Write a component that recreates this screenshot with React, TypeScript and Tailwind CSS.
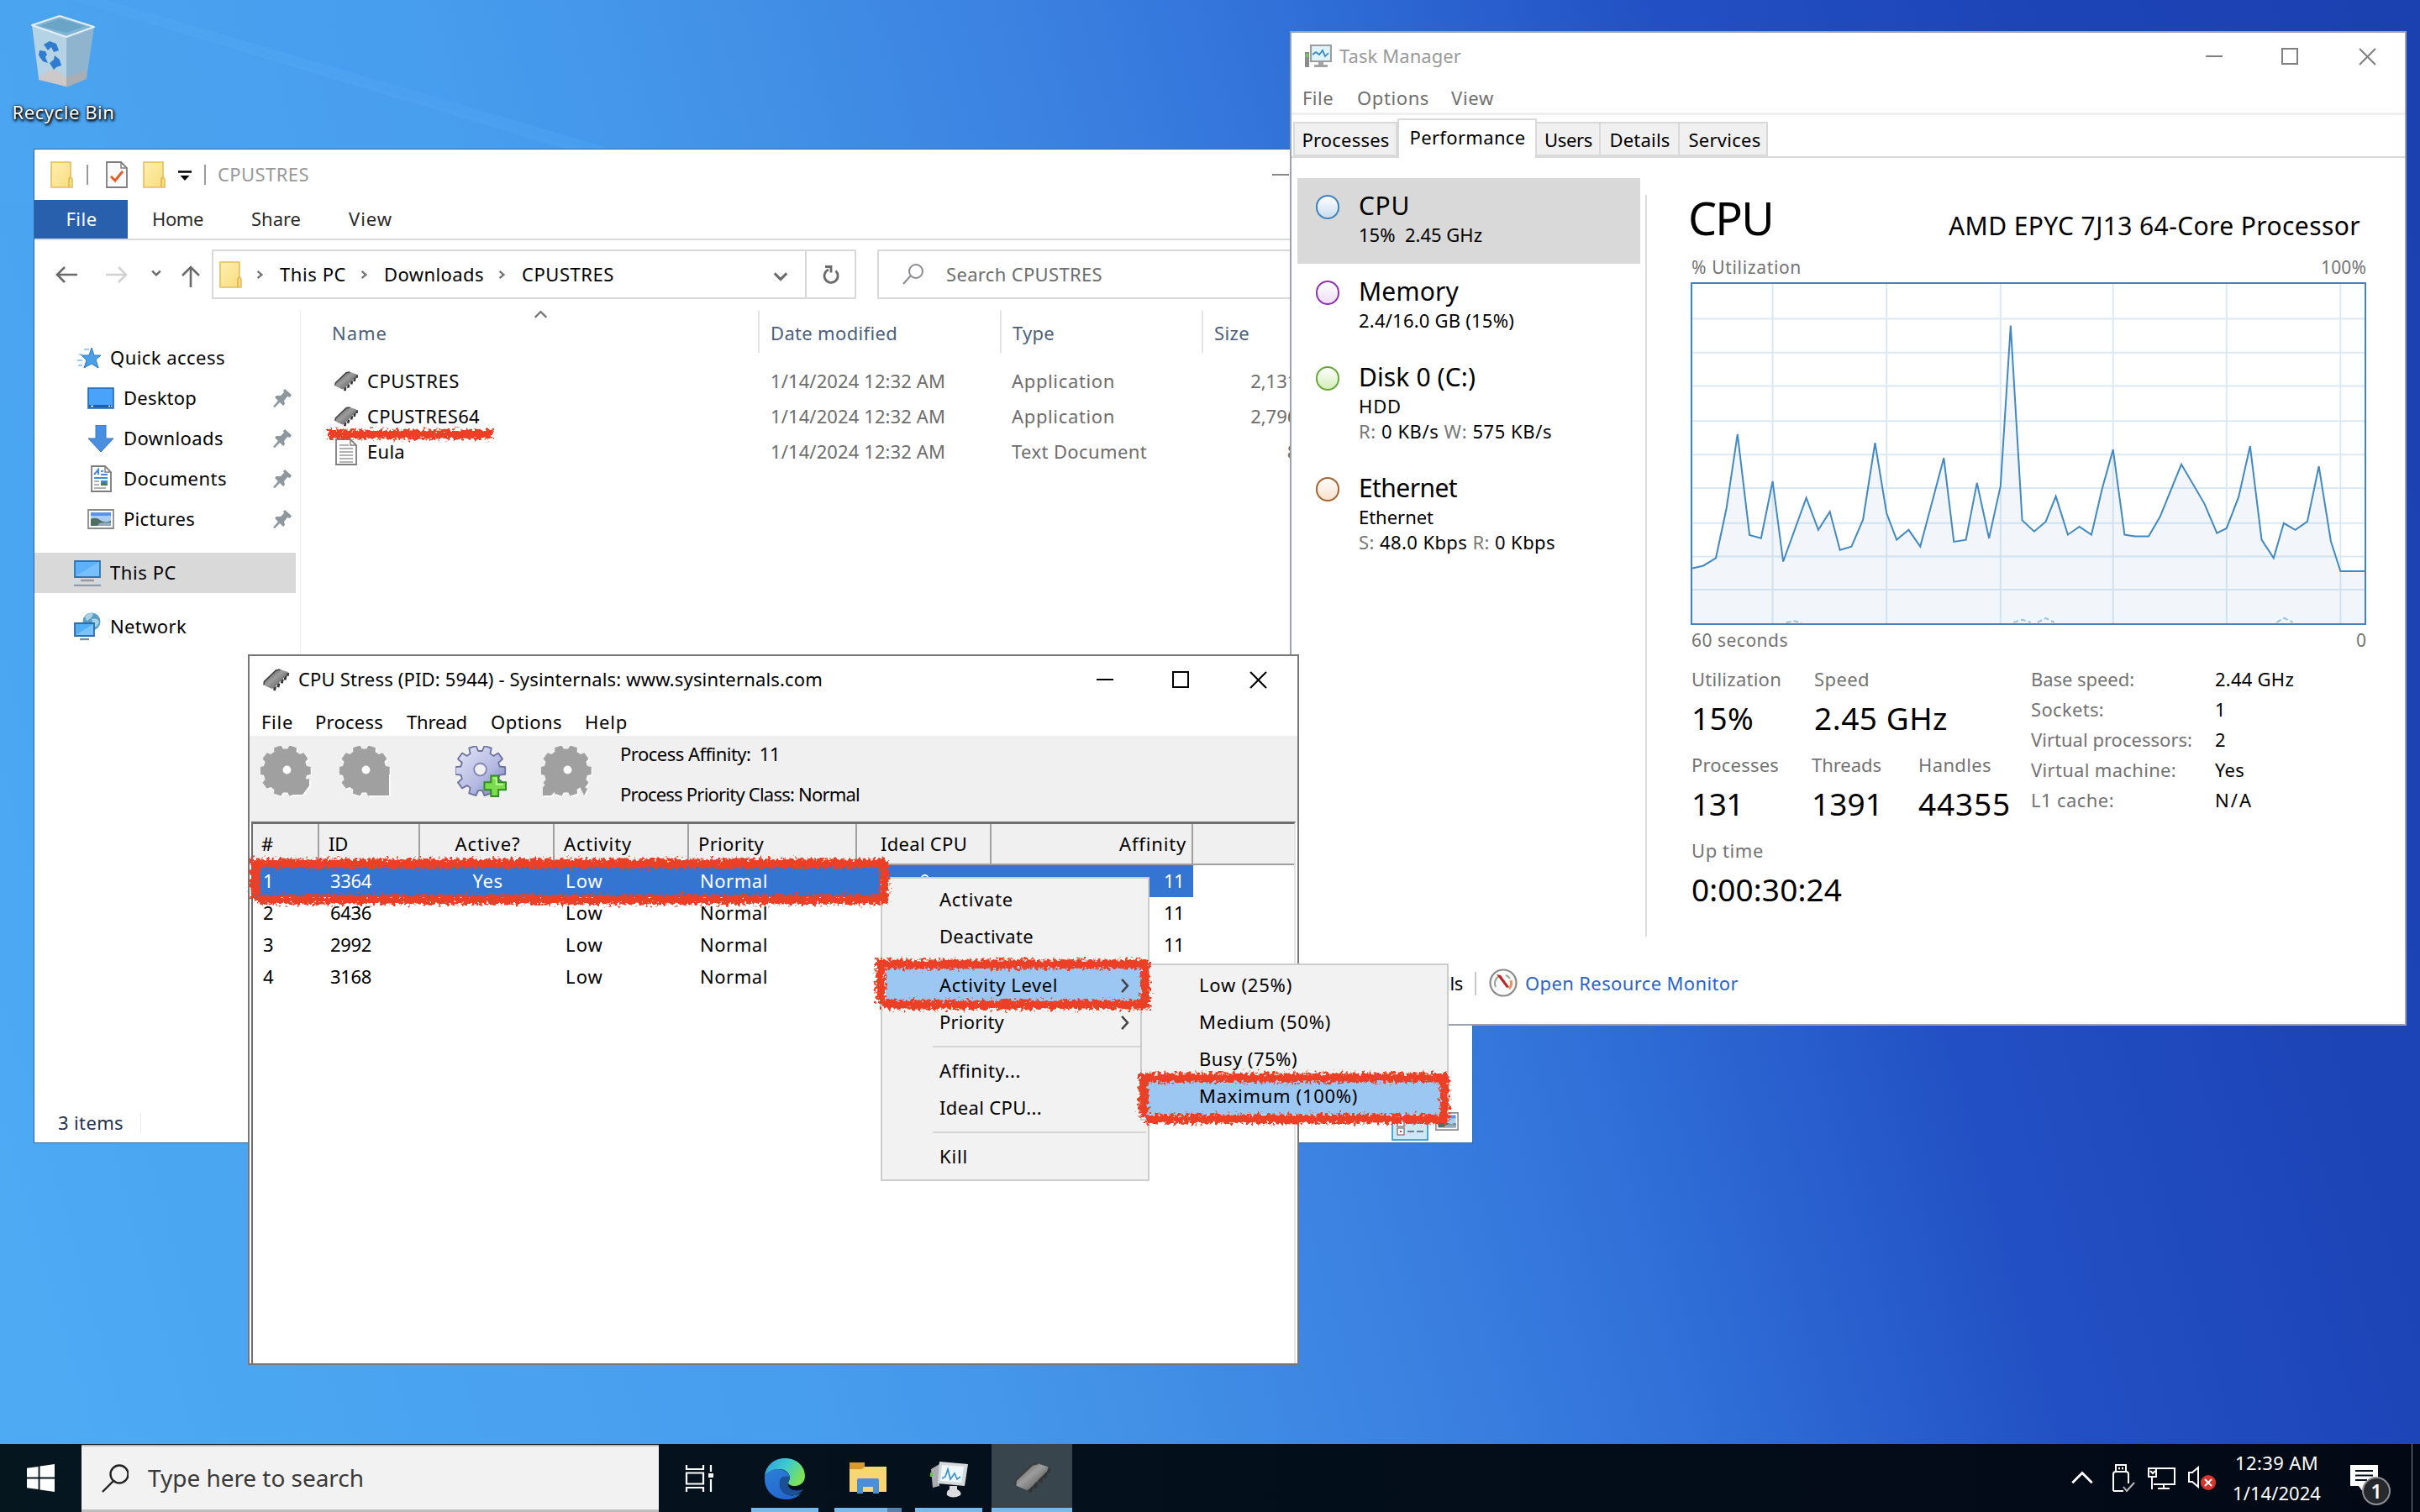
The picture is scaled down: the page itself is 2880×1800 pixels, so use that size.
import React, { useLayoutEffect, useRef } from "react";

/* Text run whose tracking is adjusted so that it fills a given width. */
function T({ w, className = "", children }: { w?: number; className?: string; children: React.ReactNode }) {
  const ref = useRef<HTMLSpanElement>(null);
  useLayoutEffect(() => {
    const el = ref.current;
    if (!el || !w) return;
    el.style.letterSpacing = "0px";
    const n = (el.textContent || "").length;
    const natural = el.getBoundingClientRect().width;
    el.style.letterSpacing = (w + 3 - natural) / n + "px";
  }, [w]);
  return (
    <span ref={ref} className={"inline-block shrink-0 whitespace-pre pb-[2px] pl-px " + className}>
      {children}
    </span>
  );
}

/* ---------- icons ---------- */

const Folder = ({ className = "" }) => (
  <svg viewBox="0 0 27 32" className={"h-8 w-[27px] shrink-0 " + className}>
    <defs>
      <linearGradient id="fold" x1="0" y1="0" x2="1" y2="1">
        <stop offset="0" stopColor="#fff0b0" />
        <stop offset="1" stopColor="#f8dc7e" />
      </linearGradient>
    </defs>
    <path d="M1 1h23v18l2 2v10H1z" fill="url(#fold)" stroke="#e3bf55" strokeWidth="1.6" />
    <path d="M22 31V22q0-3 3-3" fill="none" stroke="#dcb64a" strokeWidth="1.6" />
  </svg>
);

const CheckDoc = ({ className = "" }) => (
  <svg viewBox="0 0 26 32" className={"h-8 w-[26px] shrink-0 " + className}>
    <path d="M1 1h17l7 7v23H1z" fill="#fafafa" stroke="#7d7d7d" strokeWidth="1.8" />
    <path d="M18 1v7h7" fill="none" stroke="#7d7d7d" strokeWidth="1.4" />
    <path d="M6 18l5 5 9-11" fill="none" stroke="#e0602a" strokeWidth="3" />
  </svg>
);

const Chip = ({ className = "" }) => (
  <svg viewBox="0 0 32 28" preserveAspectRatio="none" className={"shrink-0 " + className}>
    <defs>
      <linearGradient id="chip" x1="0" y1="0" x2="1" y2="1">
        <stop offset="0" stopColor="#4a4a4a" />
        <stop offset="0.45" stopColor="#9c9c9c" />
        <stop offset="1" stopColor="#4a4a4a" />
      </linearGradient>
    </defs>
    <path d="M14 27l1-5M18.500 23l1-5M23 18l1-5M27 14l1-6M30 9l1-4" stroke="#333" strokeWidth="3" />
    <path d="M1 16L16 2l5-1 9 3-1 4-15 15-3 2-9-4z" fill="url(#chip)" />
    <path d="M1 20L1.500 16 16 2l5-1" fill="none" stroke="#3c3c3c" strokeWidth="1.600" />
    <path d="M12 24L30 5" stroke="#7c7c7c" strokeWidth="1.500" />
  </svg>
);

const TextDoc = () => (
  <svg viewBox="0 0 26 32" className="h-[32px] w-[26px] shrink-0">
    <path d="M1 1h17l7 7v23H1z" fill="#fff" stroke="#7d7d7d" strokeWidth="1.8" />
    <path d="M18 1v7h7" fill="none" stroke="#7d7d7d" strokeWidth="1.4" />
    <path d="M5 8h11M5 12h16M5 16h16M5 20h16M5 24h16M5 28h16" stroke="#999" strokeWidth="1.5" />
  </svg>
);

const Pin = () => (
  <svg viewBox="0 0 24 22" className="h-[22px] w-6 shrink-0">
    <path d="M14 0l8 7-2 3-3-1-4 5 1 4-2 2-4-4-6 6-2-1 6-7-4-4 2-2 5 0 4-4-1-2z" fill="#8d979d" />
  </svg>
);

const Star = () => (
  <svg viewBox="0 0 28 26" className="h-[26px] w-7 shrink-0">
    <path d="M17 1l3 9h8l-6 5 3 10-8-5-9 5 3-9-6-6h9z" fill="#49a0e8" stroke="#2a78c2" />
    <path d="M8 3h6M2 9h4M0 16h6M1 22h5" stroke="#7cb9ec" strokeWidth="1.6" />
  </svg>
);

const DesktopIcon = () => (
  <svg viewBox="0 0 32 26" className="h-[26px] w-8 shrink-0">
    <path d="M1 1h30v24H1z" fill="#4aa3fb" stroke="#2266b0" strokeWidth="1.6" />
    <path d="M2 21h28v3H2z" fill="#1c5fae" />
    <path d="M4 22.500h3M25 22.500h2M28 22.500h1.500" stroke="#fff" strokeWidth="1.500" />
  </svg>
);

const DownIcon = () => (
  <svg viewBox="0 0 32 32" className="h-8 w-8 shrink-0">
    <path d="M10 0h12v16h9L16 32 1 16h9z" fill="#4a8ee0" stroke="#3a76c4" />
  </svg>
);

const DocIcon = () => (
  <svg viewBox="0 0 32 32" className="h-8 w-8 shrink-0">
    <path d="M5 1h16l7 7v23H5z" fill="#fff" stroke="#7d7d7d" strokeWidth="1.8" />
    <path d="M21 1v7h7" fill="none" stroke="#7d7d7d" strokeWidth="1.4" />
    <path d="M8 11l5-6v6M16 7h3M16 11h8M8 15h16" stroke="#3d8fdc" strokeWidth="2" fill="none" />
    <path d="M8 19h6M8 23h6M8 27h14" stroke="#999" strokeWidth="1.6" />
    <path d="M16 18h8v6h-8z" fill="#3f8bc9" />
    <path d="M16 22l4-2 4 3v1h-8z" fill="#4b7a4b" />
  </svg>
);

const PicIcon = ({ className = "h-6 w-8" }) => (
  <svg viewBox="0 0 32 24" preserveAspectRatio="none" className={"shrink-0 " + className}>
    <path d="M1 1h30v22H1z" fill="#fff" stroke="#8a8a8a" strokeWidth="1.8" />
    <path d="M4 4h24v16H4z" fill="#a9cdf3" />
    <path d="M4 4h24v4H4z" fill="#5a93e8" />
    <path d="M4 12q6-3 11 1t13 1v6H4z" fill="#4e6f62" />
    <path d="M14 17q7-2 14-1v4H12z" fill="#90aac0" />
  </svg>
);

const PcIcon = () => (
  <svg viewBox="0 0 32 32" className="h-8 w-8 shrink-0">
    <path d="M1 2h30v19H1z" fill="#5cb1f9" stroke="#2f75b5" strokeWidth="1.8" />
    <path d="M2 20L30 3v17z" fill="#8cc8fb" opacity="0.6" />
    <path d="M8 25h16M0 31h32" stroke="#8e9cab" strokeWidth="2.400" />
  </svg>
);

const NetIcon = () => (
  <svg viewBox="0 0 32 34" className="h-[34px] w-8 shrink-0">
    <circle cx="21" cy="11" r="10.500" fill="#5a9cc4" />
    <path d="M13 5q6-6 10-3-2 6-8 8zM21 8q7-2 9 3-2 7-6 7z" fill="#a8d2e6" />
    <path d="M1 13h23v15H1z" fill="#52aef5" stroke="#2d6da8" strokeWidth="1.8" />
    <path d="M2 27L23 14v13z" fill="#8ccbf9" opacity="0.7" />
    <path d="M7 32h11" stroke="#7e8c99" strokeWidth="2.400" />
  </svg>
);

const Chevron = ({ d, className = "", sw = 2.6 }: { d: string; className?: string; sw?: number }) => (
  <svg viewBox="0 0 20 20" className={"shrink-0 " + className} fill="none" stroke="currentColor" strokeWidth={sw}>
    <path d={d} />
  </svg>
);
const RIGHT = "M6 3l8 7-8 7";
const DOWN = "M2 6l8 8 8-8";

const Controls = ({ className = "" }) => (
  <div className={"ml-auto flex items-center " + className}>
    <svg viewBox="0 0 20 20" className="h-5 w-5" stroke="currentColor" strokeWidth="2"><path d="M0 10h20" /></svg>
    <svg viewBox="0 0 20 20" className="ml-[70px] h-5 w-5" fill="none" stroke="currentColor" strokeWidth="2"><path d="M1 1h18v18H1z" /></svg>
    <svg viewBox="0 0 20 20" className="ml-[72px] h-[21px] w-[21px]" fill="none" stroke="currentColor" strokeWidth="2"><path d="M1 1l18 18M19 1L1 19" /></svg>
  </div>
);

function gearPath(c: number, inner: number, outer: number, teeth: number) {
  const pts: string[] = [];
  for (let i = 0; i < teeth; i++) {
    const a = (i / teeth) * Math.PI * 2 - Math.PI / 2 + Math.PI / teeth;
    const s = Math.PI / teeth;
    const at = (r: number, t: number) => (c + r * Math.cos(t)).toFixed(1) + " " + (c + r * Math.sin(t)).toFixed(1);
    pts.push(at(inner, a - s * 0.68), at(outer, a - s * 0.46), at(outer, a + s * 0.46), at(inner, a + s * 0.68));
  }
  return "M" + pts.join("L") + "Z";
}
const GEAR = gearPath(30, 24, 30.5, 10);
const BLOB = gearPath(30, 26.5, 31, 10);
const HOLE = "M30 23.500a5 5 0 1 0 .01 0z";

const GrayGear = ({ extra = "", className = "" }) => (
  <svg viewBox="0 0 62 62" className={"h-[61px] w-[61px] shrink-0 " + className}>
    <g transform="translate(1.500 1.500)" fill="#fff">
      <path d={BLOB} />
      {extra && <path d={extra} />}
    </g>
    <path d={BLOB} fill="#a0a0a0" />
    {extra && <path d={extra} fill="#a0a0a0" />}
    <circle cx="32" cy="29" r="5" fill="#fff" />
  </svg>
);

const AddGear = ({ className = "" }) => (
  <svg viewBox="0 0 62 62" className={"h-[61px] w-[61px] shrink-0 " + className}>
    <defs>
      <linearGradient id="gear" x1="0" y1="0" x2="1" y2="1">
        <stop offset="0" stopColor="#e6e8f8" />
        <stop offset="0.6" stopColor="#b4b9e2" />
        <stop offset="1" stopColor="#6f76b4" />
      </linearGradient>
    </defs>
    <path d={GEAR + HOLE} fill="url(#gear)" fillRule="evenodd" stroke="#6a6f9c" strokeWidth="1.800" strokeLinejoin="round" />
    <circle cx="30" cy="28.500" r="7.500" fill="#f0f0f0" stroke="#8287b4" strokeWidth="2" />
    <path d="M43 36h9v8h9v9h-9v8h-9v-8h-8v-9h8z" fill="#7ddc4e" stroke="#2f8f1c" strokeWidth="2" />
    <path d="M45.500 39h4v7.500h8" stroke="#bdf59a" strokeWidth="2" fill="none" />
  </svg>
);

const TaskMgrIcon = () => (
  <svg viewBox="0 0 33 28" className="h-7 w-[33px] shrink-0">
    <path d="M1 9h5v18H1z" fill="#8c8c8c" />
    <path d="M2 11h3v4H2z" fill="#6fd44a" />
    <path d="M8 1h24v19H8z" fill="#dff3fc" stroke="#9d9d9d" strokeWidth="2.200" />
    <path d="M10 12l4-3 4 3 4-5 3 7 4-4" fill="none" stroke="#2f86c4" strokeWidth="1.700" />
    <path d="M17 21h6v3h5v3H12v-3h5z" fill="#a3a3a3" />
  </svg>
);

const RecycleBin = () => (
  <svg viewBox="0 0 76 86" className="h-[86px] w-[76px]">
    <path d="M1 12L42 24v61L9 75z" fill="#b4d3e4" />
    <path d="M42 24l33-10-9 61-24 10z" fill="#8fb5ce" />
    <path d="M1 12L34 1l41 13-33 12z" fill="#7fb6d6" stroke="#e4eef4" strokeWidth="2" strokeLinejoin="round" />
    <path d="M10 13l24-9 30 9-22 8z" fill="#6aa5c8" />
    <path d="M9 73l18-9 15 10v11L9 77z" fill="#cdc8c9" />
    <path d="M42 74l23-8 1 10-24 10z" fill="#a9adb4" />
    <g fill="#2f7bd0">
      <path d="M15 35l7-4 8 3 3 8-6 2-3-6-4 4z" />
      <path d="M10 42l7 1 2 4-2 3 3 7-6-2-5-7z" />
      <path d="M22 57l5-4 1-5 6 5 2 7-6 2-3 3z" />
    </g>
  </svg>
);

/* ---------- explorer ---------- */

const quick: [string, number, () => React.ReactElement][] = [
  ["Desktop", 85, DesktopIcon],
  ["Downloads", 117, DownIcon],
  ["Documents", 121, DocIcon],
  ["Pictures", 83, () => <PicIcon />],
];

const files: [string, number, boolean, string, number, string][] = [
  ["CPUSTRES", 108, true, "Application", 121, "2,131 KB"],
  ["CPUSTRES64", 132, true, "Application", 121, "2,796 KB"],
  ["Eula", 43, false, "Text Document", 159, "8 KB"],
];

function Explorer() {
  return (
    <div className="absolute left-[40px] top-[177px] flex h-[1184px] w-[1713px] flex-col border border-[#2f6aa3] bg-white text-black">
      <div className="flex h-[60px] shrink-0 items-center pl-[19px]">
        <Folder />
        <div className="ml-4 h-6 w-[2px] bg-[#9a9a9a]" />
        <CheckDoc className="ml-[21px]" />
        <Folder className="ml-[18px]" />
        <svg viewBox="0 0 16 14" className="ml-[15px] mt-1 h-[14px] w-4"><path d="M0 1.500h16" stroke="#000" strokeWidth="2.500" /><path d="M2.500 6h11L8 12z" /></svg>
        <div className="ml-[15px] h-6 w-[2px] bg-[#9a9a9a]" />
        <T w={107} className="ml-[13px] text-[#999]">CPUSTRES</T>
        <div className="ml-auto mr-[218px] h-[2px] w-5 bg-[#888]" />
      </div>
      <div className="flex h-12 shrink-0 items-center border-b-2 border-[#dadbdc] text-[#2b2b2b]">
        <div className="flex h-full w-[111px] items-center justify-center bg-[#2860ae] text-white"><T w={35}>File</T></div>
        <T w={59} className="ml-[28px]">Home</T>
        <T w={57} className="ml-[56px]">Share</T>
        <T w={50} className="ml-[56px]">View</T>
      </div>
      <div className="flex h-[84px] shrink-0 items-start pl-[25px] pt-[11px]">
        <div className="flex h-[59px] items-center text-[#6a6a6a]">
          <svg viewBox="0 0 26 20" className="h-5 w-[26px]" fill="none" stroke="currentColor" strokeWidth="2.600"><path d="M11 1l-9 9 9 9M2 10h24" /></svg>
          <svg viewBox="0 0 26 20" className="ml-[34px] h-5 w-[26px] text-[#d2d2d2]" fill="none" stroke="currentColor" strokeWidth="2.600"><path d="M15 1l9 9-9 9M24 10H0" /></svg>
          <Chevron d={DOWN} sw={4} className="ml-[28px] mb-1 h-3 w-3" />
          <svg viewBox="0 0 24 26" className="ml-[23px] mt-1 h-[26px] w-6" fill="none" stroke="currentColor" strokeWidth="2.600"><path d="M2 12L12 2l10 10M12 2v24" /></svg>
        </div>
        <div className="ml-[13px] flex h-[59px] w-[767px] items-center border-2 border-[#d9d9d9] pl-[7px]">
          <Folder />
          <Chevron d={RIGHT} sw={4} className="ml-[15px] h-3 w-3 text-[#777]" />
          <T w={77} className="ml-[17px]">This PC</T>
          <Chevron d={RIGHT} sw={4} className="ml-[15px] h-3 w-3 text-[#777]" />
          <T w={117} className="ml-[17px]">Downloads</T>
          <Chevron d={RIGHT} sw={4} className="ml-[15px] h-3 w-3 text-[#777]" />
          <T w={108} className="ml-[17px]">CPUSTRES</T>
          <Chevron d={DOWN} sw={3.400} className="ml-auto mt-1 h-[18px] w-[18px] text-[#6a6a6a]" />
          <div className="ml-5 flex h-full w-[59px] items-center justify-center border-l-2 border-[#d9d9d9] text-[#6a6a6a]">
            <svg viewBox="0 0 20 24" className="h-6 w-5" fill="none" stroke="currentColor" strokeWidth="2.800"><path d="M15.500 7.500A8 8 0 1 1 7 6M3 2.500h7v7" /></svg>
          </div>
        </div>
        <div className="ml-[25px] flex h-[59px] w-[695px] items-center border-2 border-[#d9d9d9] pl-[28px]">
          <svg viewBox="0 0 25 25" className="h-[25px] w-[25px]" fill="none" stroke="#8a8a92" strokeWidth="2"><circle cx="16" cy="9" r="8" /><path d="M10 14L1 24" /></svg>
          <T w={184} className="ml-[26px] text-[#6d6d6d]">Search CPUSTRES</T>
        </div>
      </div>
      <div className="flex min-h-0 flex-1">
        <div className="flex w-[317px] shrink-0 flex-col border-r border-[#ececec] pt-8">
          <div className="flex h-12 items-center pl-[51px]"><Star /><T w={135} className="ml-[10px]">Quick access</T></div>
          {quick.map(([name, w, Icon]) => (
            <div key={name} className="flex h-12 items-center pl-[63px] pr-2">
              <Icon /><T w={w} className="ml-[10px]">{name}</T>
              <div className="ml-auto"><Pin /></div>
            </div>
          ))}
          <div className="mr-[5px] mt-4 flex h-12 items-center bg-[#d9d9d9] pl-[47px]"><PcIcon /><T w={77} className="ml-[10px]">This PC</T></div>
          <div className="mt-4 flex h-12 items-center pl-[47px]"><NetIcon /><T w={89} className="ml-[10px]">Network</T></div>
        </div>
        <div className="flex-1">
          <div className="relative flex h-[50px] items-stretch text-[#4c607a]">
            <Chevron d="M2 14l8-8 8 8" sw={2.600} className="absolute left-[277px] top-[-4px] h-[17px] w-[17px] text-[#777]" />
            <div className="flex w-[546px] items-center border-r-2 border-[#e3e3e3] pl-9 pt-[3px]"><T w={64}>Name</T></div>
            <div className="flex w-[288px] items-center border-r-2 border-[#e3e3e3] pl-3 pt-[3px]"><T w={149}>Date modified</T></div>
            <div className="flex w-[240px] items-center border-r-2 border-[#e3e3e3] pl-3 pt-[3px]"><T w={48}>Type</T></div>
            <div className="flex items-center pl-3 pt-[3px]"><T w={40}>Size</T></div>
          </div>
          <div className="mt-[13px]">
            {files.map(([name, w, app, type, tw, size]) => (
              <div key={name} className="flex h-[42px] items-center">
                <div className="flex w-[558px] items-center pl-10">
                  <div className="flex w-7 justify-center">{app ? <Chip className="h-6 w-7" /> : <TextDoc />}</div>
                  <T w={w} className="ml-[10px]">{name}</T>
                </div>
                <div className="w-[287px] text-[#6d6d6d]"><T w={206}>1/14/2024 12:32 AM</T></div>
                <div className="w-[228px] text-[#6d6d6d]"><T w={tw}>{type}</T></div>
                <div className="w-[147px] text-right text-[#6d6d6d]"><T>{size}</T></div>
              </div>
            ))}
          </div>
        </div>
      </div>
      <div className="flex h-12 shrink-0 items-center pl-[27px] pt-[2px] text-[#22334f]">
        <T w={76}>3 items</T>
        <div className="ml-5 h-6 w-px bg-[#e8e8e8]" />
        <div className="ml-auto mr-[16px] flex items-center">
          <div className="flex h-[42px] w-11 items-center justify-center border-2 border-[#4aa5d8] bg-[#cfe8f8]">
            <svg viewBox="0 0 32 32" className="h-8 w-8">
              {[2, 12, 22].map((y) => (
                <g key={y}>
                  <path d={`M1 ${y}h8v8h-8z`} fill="#fff" stroke="#8a8a8a" strokeWidth="1.600" />
                  <path d={`M4 ${y + 3}h2v2h-2z`} fill="#c33" />
                  <path d={`M13 ${y + 4}h8M24 ${y + 4}h8`} stroke="#6d7f8c" strokeWidth="2" />
                </g>
              ))}
            </svg>
          </div>
          <PicIcon className="mb-1 ml-[8px] h-[22px] w-7" />
        </div>
      </div>
    </div>
  );
}

/* ---------- task manager ---------- */

const trace =
  "57,1247 80,1239 106,1215 128,1060 151,828 176,1143 200,1153 224,975 246,1226 294,1027 319,1127 343,1070 364,1190 388,1179 412,1095 437,855 461,1075 482,1158 507,1127 531,1179 580,902 601,1164 626,1158 649,980 674,1153 698,990 719,488 743,1097 768,1132 792,1101 813,1022 838,1142 862,1117 887,1142 909,1000 932,876 956,1142 977,1147 1006,1147 1030,1085 1074,922 1122,1045 1148,1137 1168,1122 1193,1025 1217,865 1241,1158 1266,1215 1287,1106 1311,1127 1336,1101 1360,928 1385,1163 1405,1256 1455,1256";

function Chart() {
  return (
    <svg viewBox="57 358 1398 1061" preserveAspectRatio="none" className="h-[408px] w-full border-2 border-[#3f84bf] bg-white" fill="none">
      <g stroke="#dbe9f4" strokeWidth="2">
        {[467, 573, 677, 787, 892, 996, 1106, 1210, 1314].map((y) => <path key={y} d={`M57 ${y}H1455`} vectorEffect="non-scaling-stroke" />)}
        {[224, 461, 698, 932, 1168, 1405].map((x) => <path key={x} d={`M${x} 358V1419`} vectorEffect="non-scaling-stroke" />)}
      </g>
      <polygon points={"57,1419 " + trace + " 1455,1419"} fill="#1f6bb0" fillOpacity="0.06" />
      <polyline points={trace} stroke="#4189c0" strokeWidth="2" vectorEffect="non-scaling-stroke" />
      <g stroke="#9fbfd8" strokeWidth="2" strokeDasharray="6 3">
        <path d="M725 1416l18-8 18 8M775 1416l17-13 18 13M1272 1416l16-13 18 13M252 1417l16-5 16 5" vectorEffect="non-scaling-stroke" />
      </g>
    </svg>
  );
}

const tabs: [string, number, string][] = [
  ["Processes", 102, "h-[41px] w-[124px] border-2 bg-[#f0f0f0] pt-[3px]"],
  ["Performance", 136, "-mb-[2px] h-[47px] w-[166px] border-x-2 border-t-2 bg-white pb-[4px]"],
  ["Users", 55, "h-[41px] w-[76px] border-y-2 border-r-2 bg-[#f0f0f0] pt-[3px]"],
  ["Details", 70, "h-[41px] w-[94px] border-y-2 border-r-2 bg-[#f0f0f0] pt-[3px]"],
  ["Services", 84, "h-[41px] w-[105px] border-y-2 border-r-2 bg-[#f0f0f0] pl-[3px] pt-[3px]"],
];

function Resource({ className, ring, title, tw, children }: { className: string; ring: string; title: string; tw: number; children: React.ReactNode }) {
  return (
    <div className={"flex w-[408px] pl-[22px] pt-[17px] " + className}>
      <div className={"mt-[3px] h-[29px] w-[28px] shrink-0 rounded-full border-2 bg-linear-to-b from-white " + ring} />
      <div className="ml-[22px] flex flex-col">
        <div className="flex h-[34px] items-center text-[30px]"><T w={tw}>{title}</T></div>
        {children}
      </div>
    </div>
  );
}

function Stat({ label, lw, value, vw }: { label: string; lw: number; value: string; vw: number }) {
  return (
    <div className="flex flex-col">
      <div className="flex h-9 items-center text-[#737373]"><T w={lw}>{label}</T></div>
      <div className="flex h-[58px] items-center text-[37px]"><T w={vw}>{value}</T></div>
    </div>
  );
}

const facts: [string, number, string, number][] = [
  ["Base speed:", 121, "2.44 GHz", 92],
  ["Sockets:", 85, "1", 10],
  ["Virtual processors:", 190, "2", 11],
  ["Virtual machine:", 171, "Yes", 33],
  ["L1 cache:", 97, "N/A", 43],
];

function TaskManager() {
  return (
    <div className="absolute left-[1535px] top-[37px] flex h-[1184px] w-[1329px] flex-col border-2 border-[#9aa3ad] bg-white text-black">
      <div className="flex h-[56px] shrink-0 items-center pl-[15px]">
        <TaskMgrIcon />
        <T w={143} className="ml-[8px] text-[#999]">Task Manager</T>
        <Controls className="pr-[34px] text-[#808080]" />
      </div>
      <div className="flex h-[42px] shrink-0 items-center border-b-[3px] border-[#efefef] pl-3 pt-1 text-[#6f6f6f]">
        <T w={35}>File</T>
        <T w={84} className="ml-[27px]">Options</T>
        <T w={49} className="ml-[25px]">View</T>
      </div>
      <div className="flex h-[51px] shrink-0 items-end border-b-2 border-[#d9d9d9] pl-[2px]">
        {tabs.map(([name, w, cls]) => (
          <div key={name} className={"flex items-center justify-center border-[#d9d9d9] " + cls}><T w={w}>{name}</T></div>
        ))}
      </div>
      <div className="flex h-[931px] shrink-0">
        <div className="ml-[7px] mt-[24px] flex w-[408px] flex-col">
          <Resource className="h-[102px] bg-[#d9d9d9]" ring="border-[#3f84bf] to-[#c8dcf0]" title="CPU" tw={59}>
            <div className="flex h-[34px] items-center"><T w={145}>15%  2.45 GHz</T></div>
          </Resource>
          <Resource className="h-[102px]" ring="border-[#8e35b0] to-[#efdcf6]" title="Memory" tw={117}>
            <div className="flex h-[34px] items-center"><T w={183}>2.4/16.0 GB (15%)</T></div>
          </Resource>
          <Resource className="h-[132px]" ring="border-[#69a83a] to-[#d2edb8]" title="Disk 0 (C:)" tw={137}>
            <div className="flex h-[34px] items-center"><T w={49}>HDD</T></div>
            <div className="flex h-[26px] items-center"><T w={228}><span className="text-[#777]">R:</span> 0 KB/s <span className="text-[#777]">W:</span> 575 KB/s</T></div>
          </Resource>
          <Resource className="h-[132px]" ring="border-[#a8652f] to-[#f8e0cc]" title="Ethernet" tw={115}>
            <div className="flex h-[34px] items-center"><T w={87}>Ethernet</T></div>
            <div className="flex h-[26px] items-center"><T w={232}><span className="text-[#777]">S:</span> 48.0 Kbps <span className="text-[#777]">R:</span> 0 Kbps</T></div>
          </Resource>
        </div>
        <div className="ml-[6px] mt-[44px] h-[883px] w-[2px] bg-[#dcdcdc]" />
        <div className="ml-[52px] flex w-[804px] flex-col">
          <div className="mt-[32px] flex h-20 items-center justify-between pr-[7px]">
            <T w={99} className="-ml-[4px] text-[54px] leading-[80px]">CPU</T>
            <T w={488} className="mt-[20px] text-[30px]">AMD EPYC 7J13 64-Core Processor</T>
          </div>
          <div className="flex h-9 items-center justify-between pt-[2px] text-[21px] text-[#737373]"><T w={129}>% Utilization</T><T w={52}>100%</T></div>
          <Chart />
          <div className="flex h-9 items-center justify-between pt-[2px] text-[21px] text-[#737373]"><T w={113}>60 seconds</T><T>0</T></div>
          <div className="mt-[11px] flex">
            <div className="flex w-[404px] flex-col gap-2">
              <div className="grid grid-cols-[146px_auto] justify-start">
                <Stat label="Utilization" lw={105} value="15%" vw={72} />
                <Stat label="Speed" lw={64} value="2.45 GHz" vw={157} />
              </div>
              <div className="grid grid-cols-[143px_127px_auto] justify-start">
                <Stat label="Processes" lw={102} value="131" vw={60} />
                <Stat label="Threads" lw={81} value="1391" vw={83} />
                <Stat label="Handles" lw={85} value="44355" vw={108} />
              </div>
              <Stat label="Up time" lw={84} value="0:00:30:24" vw={177} />
            </div>
            <div className="flex flex-col">
              {facts.map(([k, kw, v, vw]) => (
                <div key={k} className="flex h-9 items-center">
                  <div className="w-[219px] text-[#737373]"><T w={kw}>{k}</T></div>
                  <T w={vw}>{v}</T>
                </div>
              ))}
            </div>
          </div>
        </div>
      </div>
      <div className="flex h-[100px] items-center pl-[27px] pt-[3px]">
        <svg viewBox="0 0 30 30" className="h-[30px] w-[30px]" fill="none" stroke="#555" strokeWidth="2"><circle cx="15" cy="15" r="13" /><path d="M9 18l6-6 6 6" /></svg>
        <T w={130} className="ml-[14px]">Fewer details</T>
        <div className="ml-[14px] h-7 w-[2px] bg-[#c8c8c8]" />
        <svg viewBox="0 0 34 34" className="mb-[2px] ml-[15px] h-[34px] w-[34px]">
          <circle cx="17" cy="17" r="15.500" fill="#fafafa" stroke="#8a8a8a" strokeWidth="2.200" />
          <path d="M8 22a10 10 0 0 1 4-13M20 8a10 10 0 0 1 5 4" fill="none" stroke="#9aa79a" strokeWidth="2.200" />
          <path d="M26 14a10 10 0 0 1-2 10" fill="none" stroke="#e8935a" strokeWidth="3" />
          <path d="M9 7l5 1 10 14-3 1z" fill="#b82a2a" />
        </svg>
        <T w={252} className="ml-[8px] text-[#2a62c8]">Open Resource Monitor</T>
      </div>
    </div>
  );
}

/* ---------- cpu stress ---------- */

const threads: [string, string, string][] = [
  ["1", "3364", "Yes"],
  ["2", "6436", ""],
  ["3", "2992", ""],
  ["4", "3168", ""],
];

function CpuStress() {
  return (
    <div className="absolute left-[295px] top-[779px] flex h-[846px] w-[1251px] flex-col border-2 border-[#777] bg-white text-black">
      <div className="flex h-[56px] shrink-0 items-center pl-4">
        <Chip className="h-[27px] w-[31px]" />
        <T w={622} className="ml-[10px] pb-0">CPU Stress (PID: 5944) - Sysinternals: www.sysinternals.com</T>
        <Controls className="pr-[36px] text-black" />
      </div>
      <div className="flex h-[39px] shrink-0 items-center pl-[13px] pt-[6px]">
        <T w={36}>File</T>
        <T w={79} className="ml-[25px]">Process</T>
        <T w={70} className="ml-[27px]">Thread</T>
        <T w={83} className="ml-[27px]">Options</T>
        <T w={49} className="ml-[26px]">Help</T>
      </div>
      <div className="flex h-[102px] shrink-0 items-start bg-[#f0f0f0] pl-[13px]">
        <GrayGear className="mt-3" extra="M40 40h19v8l-8 11h-11z" />
        <GrayGear className="ml-[33px] mt-3" extra="M34 34h26v26h-26z" />
        <AddGear className="ml-[77px] mt-3" />
        <GrayGear className="ml-[41px] mt-3" extra="M2 50l10-10 10 10-10 10h-10zM44 44l12 8-4 8z" />
        <div className="ml-[32px] flex flex-col">
          <div className="flex h-11 items-center"><T w={188}>Process Affinity:  11</T></div>
          <div className="flex h-[52px] items-center"><T w={283}>Process Priority Class: Normal</T></div>
        </div>
      </div>
      <div className="ml-[2px] mr-[2px] flex flex-1 flex-col border-l-2 border-r-2 border-t-[3px] border-[#e3e3e3] border-l-[#6e6e6e] border-t-[#6e6e6e]">
        <div className="flex h-[49px] shrink-0 items-stretch border-b-2 border-[#a0a0a0] bg-[#f0f0f0]">
          <div className="flex w-[79px] items-center border-r-2 border-[#a0a0a0] pl-[9px]"><T>#</T></div>
          <div className="flex w-[120px] items-center border-r-2 border-[#a0a0a0] pl-[10px]"><T w={21}>ID</T></div>
          <div className="flex w-[160px] items-center justify-center border-r-2 border-[#a0a0a0] pl-[2px]"><T w={76}>Active?</T></div>
          <div className="flex w-[160px] items-center border-r-2 border-[#a0a0a0] pl-[10px]"><T w={79}>Activity</T></div>
          <div className="flex w-[200px] items-center border-r-2 border-[#a0a0a0] pl-[10px]"><T w={76}>Priority</T></div>
          <div className="flex w-[160px] items-center justify-center border-r-2 border-[#a0a0a0]"><T w={101}>Ideal CPU</T></div>
          <div className="flex w-[240px] items-center justify-end border-r-2 border-[#a0a0a0] pr-[6px]"><T w={78}>Affinity</T></div>
        </div>
        {threads.map(([n, id, active]) => (
          <div key={n} className={"flex h-[38px] w-[1119px] shrink-0 items-center " + (active ? "bg-[#3375d0] text-white" : "")}>
            <div className="w-[79px] pl-[11px]"><T>{n}</T></div>
            <div className="w-[120px] pl-3"><T w={47}>{id}</T></div>
            <div className="flex w-[160px] justify-center">{active && <T w={34}>{active}</T>}</div>
            <div className="w-[160px] pl-3"><T w={43}>Low</T></div>
            <div className="w-[200px] pl-3"><T w={79}>Normal</T></div>
            <div className="flex w-[160px] justify-center"><T>0</T></div>
            <div className="flex w-[240px] justify-end pr-[11px]"><T w={22}>11</T></div>
          </div>
        ))}
      </div>
    </div>
  );
}

const Sep = () => <div className="flex h-[14px] items-center pl-[56px]"><div className="h-[2px] w-full bg-[#d5d5d5]" /></div>;

function Item({ w, hot, arrow, children }: { w: number; hot?: boolean; arrow?: boolean; children: string }) {
  return (
    <div className={"flex h-11 items-center pl-[63px] pr-[17px] " + (hot ? "bg-[#9dc7f3]" : "")}>
      <T w={w}>{children}</T>
      {arrow && <Chevron d="M6 1l8 9-8 9" sw={3} className="ml-auto h-[17px] w-[17px] text-[#444]" />}
    </div>
  );
}

function Menus() {
  return (
    <>
      <div className="absolute left-[1048px] top-[1044px] h-[362px] w-[320px] border-2 border-[#ccc] bg-[#f2f2f2] py-[3px] pl-1 pr-[2px] text-black">
        <Item w={86}>Activate</Item>
        <Item w={110}>Deactivate</Item>
        <Sep />
        <Item w={139} hot arrow>Activity Level</Item>
        <Item w={75} arrow>Priority</Item>
        <Sep />
        <Item w={95}>Affinity...</Item>
        <Item w={120}>Ideal CPU...</Item>
        <Sep />
        <Item w={32}>Kill</Item>
      </div>
      <div className="absolute left-[1357px] top-[1147px] h-[187px] w-[367px] border-2 border-[#ccc] bg-[#f2f2f2] px-1 pt-[2px] text-black">
        <Item w={109}>Low (25%)</Item>
        <Item w={155}>Medium (50%)</Item>
        <Item w={115}>Busy (75%)</Item>
        <Item w={187} hot>Maximum (100%)</Item>
      </div>
    </>
  );
}

/* Crayon strokes drawn over the windows. */
const box = (x1: number, y1: number, x2: number, y2: number) =>
  `M${x1} ${y1 + 6}H${x2 - 2}M${x2 - 6} ${y1 + 4}V${y2 - 2}M${x2 - 1} ${y2 - 6}H${x1 + 8}M${x1 + 6} ${y2 - 8}V${y1 + 2}`;

function Marks() {
  return (
    <svg viewBox="0 0 2880 1719" className="pointer-events-none absolute left-0 top-0 h-[1719px] w-[2880px]" fill="none">
      <defs>
        <filter id="crayon" filterUnits="userSpaceOnUse" x="380" y="480" width="1360" height="880">
          <feTurbulence type="fractalNoise" baseFrequency="0.28" numOctaves="2" seed="4" />
          <feDisplacementMap in="SourceGraphic" scale="13" xChannelSelector="R" yChannelSelector="G" />
        </filter>
        <filter id="crayon2" filterUnits="userSpaceOnUse" x="280" y="1010" width="1460" height="350">
          <feTurbulence type="fractalNoise" baseFrequency="0.28" numOctaves="2" seed="9" />
          <feDisplacementMap in="SourceGraphic" scale="13" xChannelSelector="R" yChannelSelector="G" />
        </filter>
      </defs>
      <path d="M391 517H587" stroke="#ec4126" strokeWidth="11" filter="url(#crayon)" />
      <path d={box(298, 1022, 1058, 1077) + box(1042, 1142, 1369, 1202) + box(1355, 1277, 1725, 1338)} stroke="#ec4126" strokeWidth="11" filter="url(#crayon2)" />
    </svg>
  );
}

/* ---------- taskbar ---------- */

function Taskbar() {
  return (
    <div className="flex h-[81px] w-full items-stretch bg-linear-to-r from-[#06161f] via-[#040f1c] to-[#020915] text-white">
      <div className="flex w-[97px] items-center justify-center">
        <svg viewBox="0 0 34 34" className="h-[33px] w-[33px]" fill="#fff"><path d="M0 5l14-2v13H0zM16 2.700L34 0v16H16zM0 18h14v13L0 29zM16 18h18v16l-18-2.700z" /></svg>
      </div>
      <div className="mt-px flex w-[687px] items-center border-b-[3px] border-t-2 border-[#bdbdbd] bg-[#f2f2f2] pl-6">
        <svg viewBox="0 0 32 34" className="h-[34px] w-8" fill="none" stroke="#222" strokeWidth="2.400"><circle cx="21" cy="12" r="10.500" /><path d="M14 20L1 33" /></svg>
        <T w={255} className="ml-[22px] pb-0 text-[28px] text-[#3a3a3a]">Type here to search</T>
      </div>
      <div className="flex w-[96px] items-center justify-center">
        <svg viewBox="0 0 34 32" className="h-8 w-[34px]" fill="none" stroke="#fff" strokeWidth="2.200"><path d="M2 0v5h20V0M2 32v-5h20v5M2 9.500h20v13H2zM31 0v8M31 17v15" /><path d="M28 10h6v5h-6z" fill="#fff" stroke="none" /></svg>
      </div>
      <div className="flex w-[108px] flex-col items-center">
        <svg viewBox="0 0 50 50" className="mt-[16px] h-[50px] w-[50px]">
          <defs>
            <linearGradient id="e1" x1="0" y1="0" x2="1" y2="0.400"><stop offset="0" stopColor="#2f9be0" /><stop offset="0.550" stopColor="#3ccbd0" /><stop offset="1" stopColor="#7be05a" /></linearGradient>
            <linearGradient id="e2" x1="0" y1="0" x2="0.600" y2="1"><stop offset="0" stopColor="#2a7fd6" /><stop offset="1" stopColor="#2666cf" /></linearGradient>
          </defs>
          <path d="M1 23C2 10 12 1 25 1c15 0 24 10 24 21 0 8-6 12-12 12-5 0-8-2-8-4 0-1 2-3 2-6 0-5-5-10-13-10C10 14 3 18 1 23z" fill="url(#e1)" />
          <path d="M1 23c3-6 9-9 15-9 9 0 15 5 15 10-9-4-13 3-12 9 1 8 9 14 18 12 3 0 6-2 8-3-5 6-12 8-18 8C11 50 0 39 1 23z" fill="url(#e2)" />
          <path d="M31 24c-9-4-13 3-12 9 1 8 9 14 18 12 4-1 8-4 10-7-8 3-20 1-18-8z" fill="#1b4f96" />
        </svg>
        <div className="mt-auto h-[5px] w-[80px] bg-[#76b9ed]" />
      </div>
      <div className="flex w-[89px] flex-col items-center">
        <svg viewBox="0 0 46 40" className="mt-[21px] h-10 w-[46px]">
          <path d="M1 1h18v5h26v30H1z" fill="#f8d673" />
          <path d="M1 1h18v5L16 9H1z" fill="#d99a2b" />
          <path d="M10 22q0-2 2-2h22q2 0 2 2v16h-7v-8H17v8h-7z" fill="#4a90d9" />
        </svg>
        <div className="mt-auto flex h-[5px] w-[80px] bg-[#76b9ed]"><div className="ml-auto w-[17px] bg-[#5580a8]" /></div>
      </div>
      <div className="flex w-[103px] flex-col items-center">
        <svg viewBox="0 0 46 44" className="mt-[20px] h-11 w-[46px]">
          <path d="M2 10l10-6v26l-8 2z" fill="#a9adb0" />
          <path d="M1 14h3v5H1z" fill="#5fca3a" />
          <path d="M12 1l34 3-4 26-32-3z" fill="#d6d9db" />
          <path d="M15 5l26 2-3 19-25-2z" fill="#eef8fd" />
          <path d="M15 21l4-2 3-9 3 12 5-7 3 7 4-3" fill="none" stroke="#3f8fd0" strokeWidth="1.700" />
          <path d="M24 30h9v4q6 3 4 7-9 5-16 0-1-5 3-7z" fill="#dcdcdc" />
        </svg>
        <div className="mt-auto h-[5px] w-[80px] bg-[#76b9ed]" />
      </div>
      <div className="flex w-[96px] flex-col items-center bg-[#38454d]">
        <Chip className="mt-[22px] h-[37px] w-[43px]" />
        <div className="mt-auto h-[5px] w-full bg-[#76b9ed]" />
      </div>
      <div className="ml-auto flex items-center">
        <Chevron d="M1 14l9-9 9 9" sw={2.200} className="h-[26px] w-[26px]" />
        <svg viewBox="0 0 27 34" className="ml-[23px] h-[34px] w-[27px]" fill="none" stroke="#fff" strokeWidth="2"><path d="M4 9V1h12v8M1 32V12q0-3 3-3h12q3 0 3 3v11M1 32h12" /><path d="M7 5h2M11 5h2" strokeWidth="2.500" /><path d="M13 27l4 5 9-10" stroke="#bbb" /></svg>
        <svg viewBox="0 0 34 28" className="ml-[15px] h-7 w-[34px]" fill="none" stroke="#fff" strokeWidth="2"><path d="M10 2h22v19H7M12 26h14M19 21v5M1 2h9v10H1zM5 12v15" /><path d="M3 5l3 3 3-3" /></svg>
        <svg viewBox="0 0 34 30" className="ml-[14px] h-[30px] w-[34px]" fill="none" stroke="#fff" strokeWidth="2"><path d="M1 8h4l7-6v23l-7-6H1z" /><circle cx="24" cy="20" r="9" fill="#d9352c" stroke="none" /><path d="M20 16l8 8M28 16l-8 8" /></svg>
        <div className="ml-[18px] flex w-[106px] flex-col items-center">
          <div className="flex h-9 items-center"><T w={97}>12:39 AM</T></div>
          <div className="flex h-9 items-center"><T w={103}>1/14/2024</T></div>
        </div>
        <div className="relative ml-[35px] h-8 w-[33px]">
          <svg viewBox="0 0 33 32" className="h-8 w-[33px]"><path d="M0 0h33v25H22l-7 7-5-7H0z" fill="#fff" /><path d="M6 7h21M6 12.500h21M6 18h14" stroke="#06101c" strokeWidth="2" /></svg>
          <div className="absolute left-[14px] top-[14px] flex h-[34px] w-[34px] items-center justify-center rounded-full border-2 border-[#8f8f8f] bg-[#26292d] text-[23px] font-semibold">1</div>
        </div>
        <div className="ml-[40px] mr-[9px] h-[81px] w-px bg-[#7b8189]" />
      </div>
    </div>
  );
}

export default function App() {
  return (
    <div className="flex h-[1800px] w-[2880px] flex-col overflow-hidden font-['Noto_Sans',sans-serif] text-[22px] leading-[30px]">
      <div className="relative h-[1719px] w-full overflow-hidden bg-[linear-gradient(74deg,#4dabf3_0%,#4aa3f0_15%,#479dee_29%,#4394e8_38%,#3f8be4_44%,#3a7fe0_52%,#3070d8_60%,#2250c4_73%,#1d45b8_85%,#1b40b0_100%)]">
        {/* light beam of the wallpaper */}
        <svg viewBox="0 0 900 240" className="absolute left-0 top-0 h-[240px] w-[900px]">
          <path d="M86 0h40L900 228v12h-20z" fill="#5ab2fa" opacity="0.22" />
          <path d="M0 0h90L900 238v2H0z" fill="#55b0fa" opacity="0.1" />
        </svg>
        <div className="absolute left-[12px] top-[18px] flex w-[126px] flex-col items-center">
          <RecycleBin />
          <T w={120} className="mt-[14px] text-white [text-shadow:1px_2px_3px_#000,1px_1px_4px_#000,0_0_2px_#000]">Recycle Bin</T>
        </div>
        <Explorer />
        <TaskManager />
        <CpuStress />
        <Menus />
        <Marks />
      </div>
      <Taskbar />
    </div>
  );
}
